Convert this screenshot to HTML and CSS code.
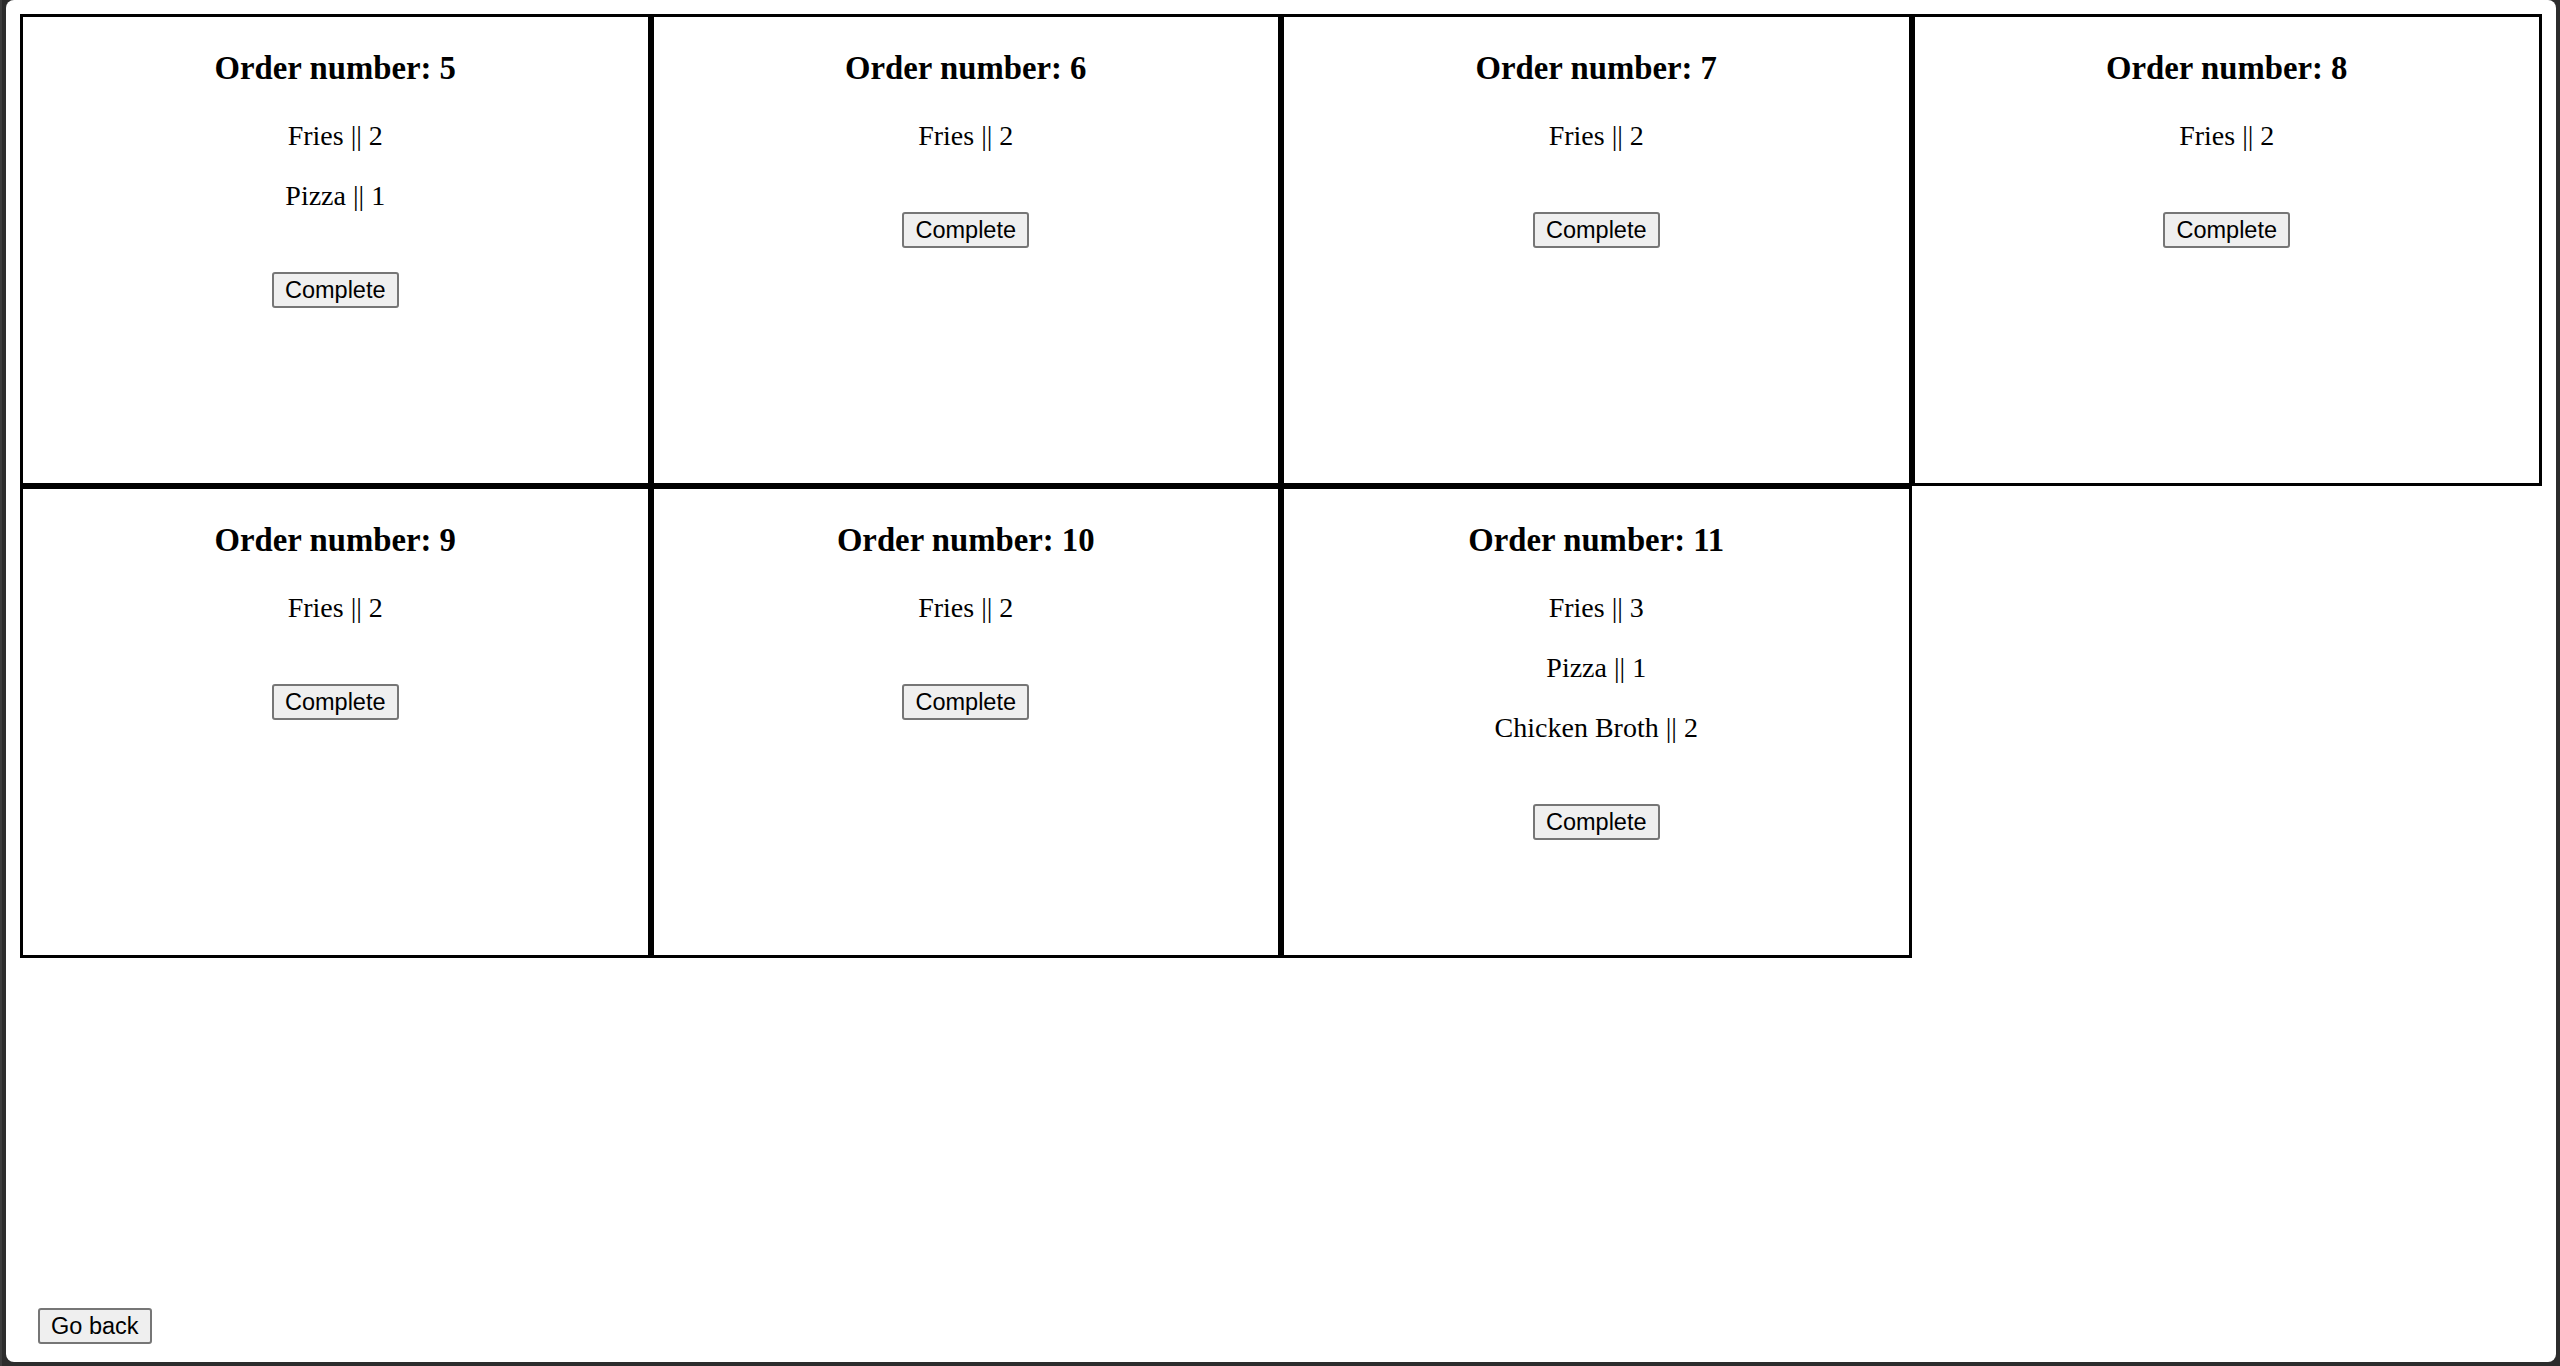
FILE: index.html
```html
<!DOCTYPE html>
<html lang="en">
<head>
<meta charset="utf-8">
<title>Orders</title>
<link rel="stylesheet" href="styles.css">
</head>
<body>
<div class="page">
  <div class="orders">
    <div class="card">
      <h3 class="card-title">Order number: 5</h3>
      <p class="item">Fries || 2</p>
      <p class="item">Pizza || 1</p>
      <div class="actions"><button class="btn">Complete</button></div>
    </div>
    <div class="card">
      <h3 class="card-title">Order number: 6</h3>
      <p class="item">Fries || 2</p>
      <div class="actions"><button class="btn">Complete</button></div>
    </div>
    <div class="card">
      <h3 class="card-title">Order number: 7</h3>
      <p class="item">Fries || 2</p>
      <div class="actions"><button class="btn">Complete</button></div>
    </div>
    <div class="card">
      <h3 class="card-title">Order number: 8</h3>
      <p class="item">Fries || 2</p>
      <div class="actions"><button class="btn">Complete</button></div>
    </div>
    <div class="card">
      <h3 class="card-title">Order number: 9</h3>
      <p class="item">Fries || 2</p>
      <div class="actions"><button class="btn">Complete</button></div>
    </div>
    <div class="card">
      <h3 class="card-title">Order number: 10</h3>
      <p class="item">Fries || 2</p>
      <div class="actions"><button class="btn">Complete</button></div>
    </div>
    <div class="card">
      <h3 class="card-title">Order number: 11</h3>
      <p class="item">Fries || 3</p>
      <p class="item">Pizza || 1</p>
      <p class="item">Chicken Broth || 2</p>
      <div class="actions"><button class="btn">Complete</button></div>
    </div>
  </div>
  <div class="footer">
    <button class="btn">Go back</button>
  </div>
</div>
</body>
</html>
```

FILE: styles.css
```css
html, body {
  height: 100%;
}

body {
  margin: 0;
  box-sizing: border-box;
  padding: 0 4px 4px 6px;
  background: #2c2c2c;
  border-left: 2px solid #3d3d3d;
  padding-left: 4px;
}

.page {
  box-sizing: border-box;
  height: 100%;
  background: #ffffff;
  border-radius: 8px;
  padding: 14px;
  display: flex;
  flex-direction: column;
  font-family: "Liberation Serif", "Times New Roman", serif;
  color: #000;
}

.orders {
  display: flex;
  flex-wrap: wrap;
}

.card {
  box-sizing: border-box;
  width: 25%;
  height: 472px;
  border: 3px solid #000;
  text-align: center;
}

.card-title {
  font-size: 32.76px;
  font-weight: bold;
  margin: 32.76px 0;
}

.item {
  font-size: 28px;
  margin: 28px 0;
}

.actions {
  display: flex;
  justify-content: center;
  margin-top: 60px;
}

.btn {
  font-family: "Liberation Sans", Arial, sans-serif;
  font-size: 23.5px;
  line-height: 28px;
  padding: 2px 11px;
  border: 2px solid #767676;
  border-radius: 3px;
  background: #efefef;
  color: #000;
}

.footer {
  margin-top: auto;
  padding: 0 0 4px 18px;
  display: flex;
}
```
